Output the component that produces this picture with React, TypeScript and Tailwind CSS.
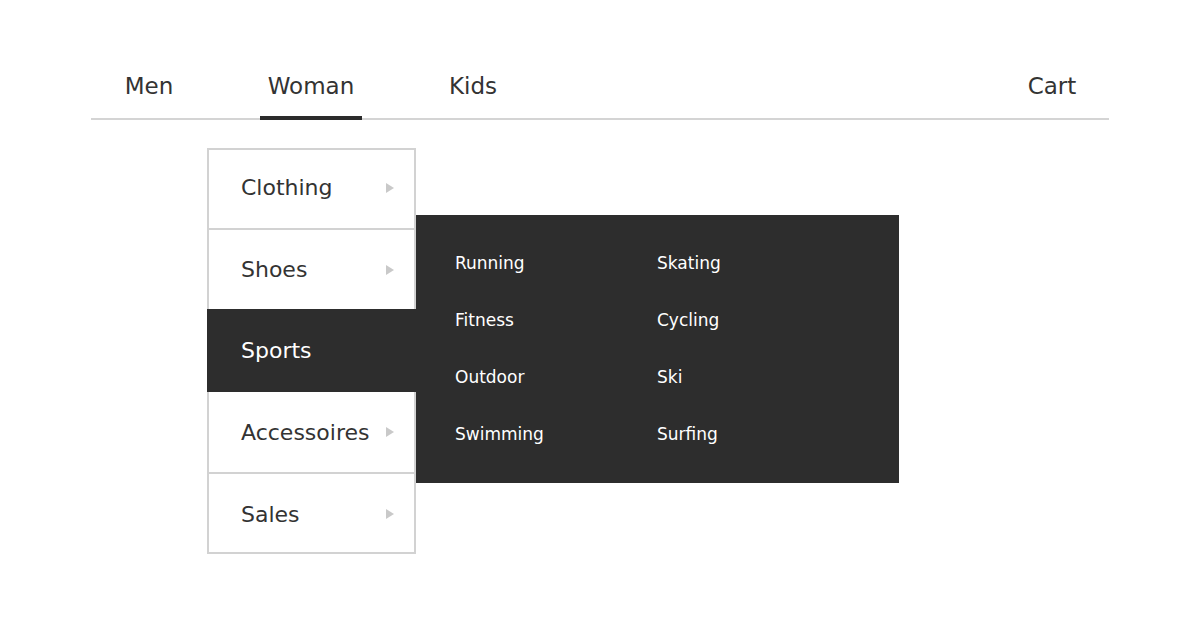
const tabs = [
  { label: "Men", active: false },
  { label: "Woman", active: true },
  { label: "Kids", active: false },
];

const categories = [
  { label: "Clothing", h: "h-[80px] pb-[3px]", cls: "border-t-2 border-x-2" },
  { label: "Shoes", h: "h-[81px]", cls: "border-t-2 border-x-2" },
  { label: "Sports", h: "h-[83px]", cls: "", active: true },
  { label: "Accessoires", h: "h-[80px]", cls: "border-x-2" },
  { label: "Sales", h: "h-[82px] pt-[2px]", cls: "border-y-2 border-x-2" },
];

const sports = [
  ["Running", "Skating"],
  ["Fitness", "Cycling"],
  ["Outdoor", "Ski"],
  ["Swimming", "Surfing"],
];

function Arrow() {
  return (
    <svg width="8" height="10" viewBox="0 0 8 10" className="ml-auto">
      <path d="M0 0 L8 5 L0 10 Z" fill="#c9c9c9" />
    </svg>
  );
}

export default function App() {
  return (
    <div
      className="w-[1200px] h-[630px] bg-white text-[#333] overflow-hidden"
      style={{ fontFamily: '"DejaVu Sans", sans-serif' }}
    >
      <div className="pt-[58px] px-[91px]">
        {/* top nav */}
        <nav className="flex items-center border-b-2 border-[#d4d4d4] pl-[7px] pr-[6px] gap-[60px]">
          {tabs.map((t) => (
            <div
              key={t.label}
              className="relative h-[60px] w-[102px] flex items-center justify-center pb-[4px] text-[23px]"
            >
              {t.label}
              {t.active && (
                <span className="absolute left-0 right-0 -bottom-[2px] h-[4px] bg-[#2b2b2b]" />
              )}
            </div>
          ))}
          <div className="ml-auto h-[60px] w-[102px] flex items-center justify-center pb-[4px] text-[23px]">
            Cart
          </div>
        </nav>

        {/* dropdown */}
        <div className="flex mt-[28px] ml-[116px]">
          <div className="w-[209px] flex flex-col">
            {categories.map((c) =>
              c.active ? (
                <div
                  key={c.label}
                  className={`${c.h} bg-[#2d2d2d] text-white flex items-center pl-[34px] text-[22px]`}
                >
                  {c.label}
                </div>
              ) : (
                <div
                  key={c.label}
                  className={`${c.h} ${c.cls} border-[#d2d2d2] flex items-center pl-[32px] pr-[20px] text-[22px]`}
                >
                  {c.label}
                  <Arrow />
                </div>
              )
            )}
          </div>

          <div className="mt-[67px] w-[483px] h-[268px] bg-[#2d2d2d] text-white pt-[20px] pl-[39px]">
            {sports.map((row) => (
              <div key={row[0]} className="grid grid-cols-[202px_1fr] h-[57px] items-center text-[17px]">
                <span>{row[0]}</span>
                <span>{row[1]}</span>
              </div>
            ))}
          </div>
        </div>
      </div>
    </div>
  );
}
